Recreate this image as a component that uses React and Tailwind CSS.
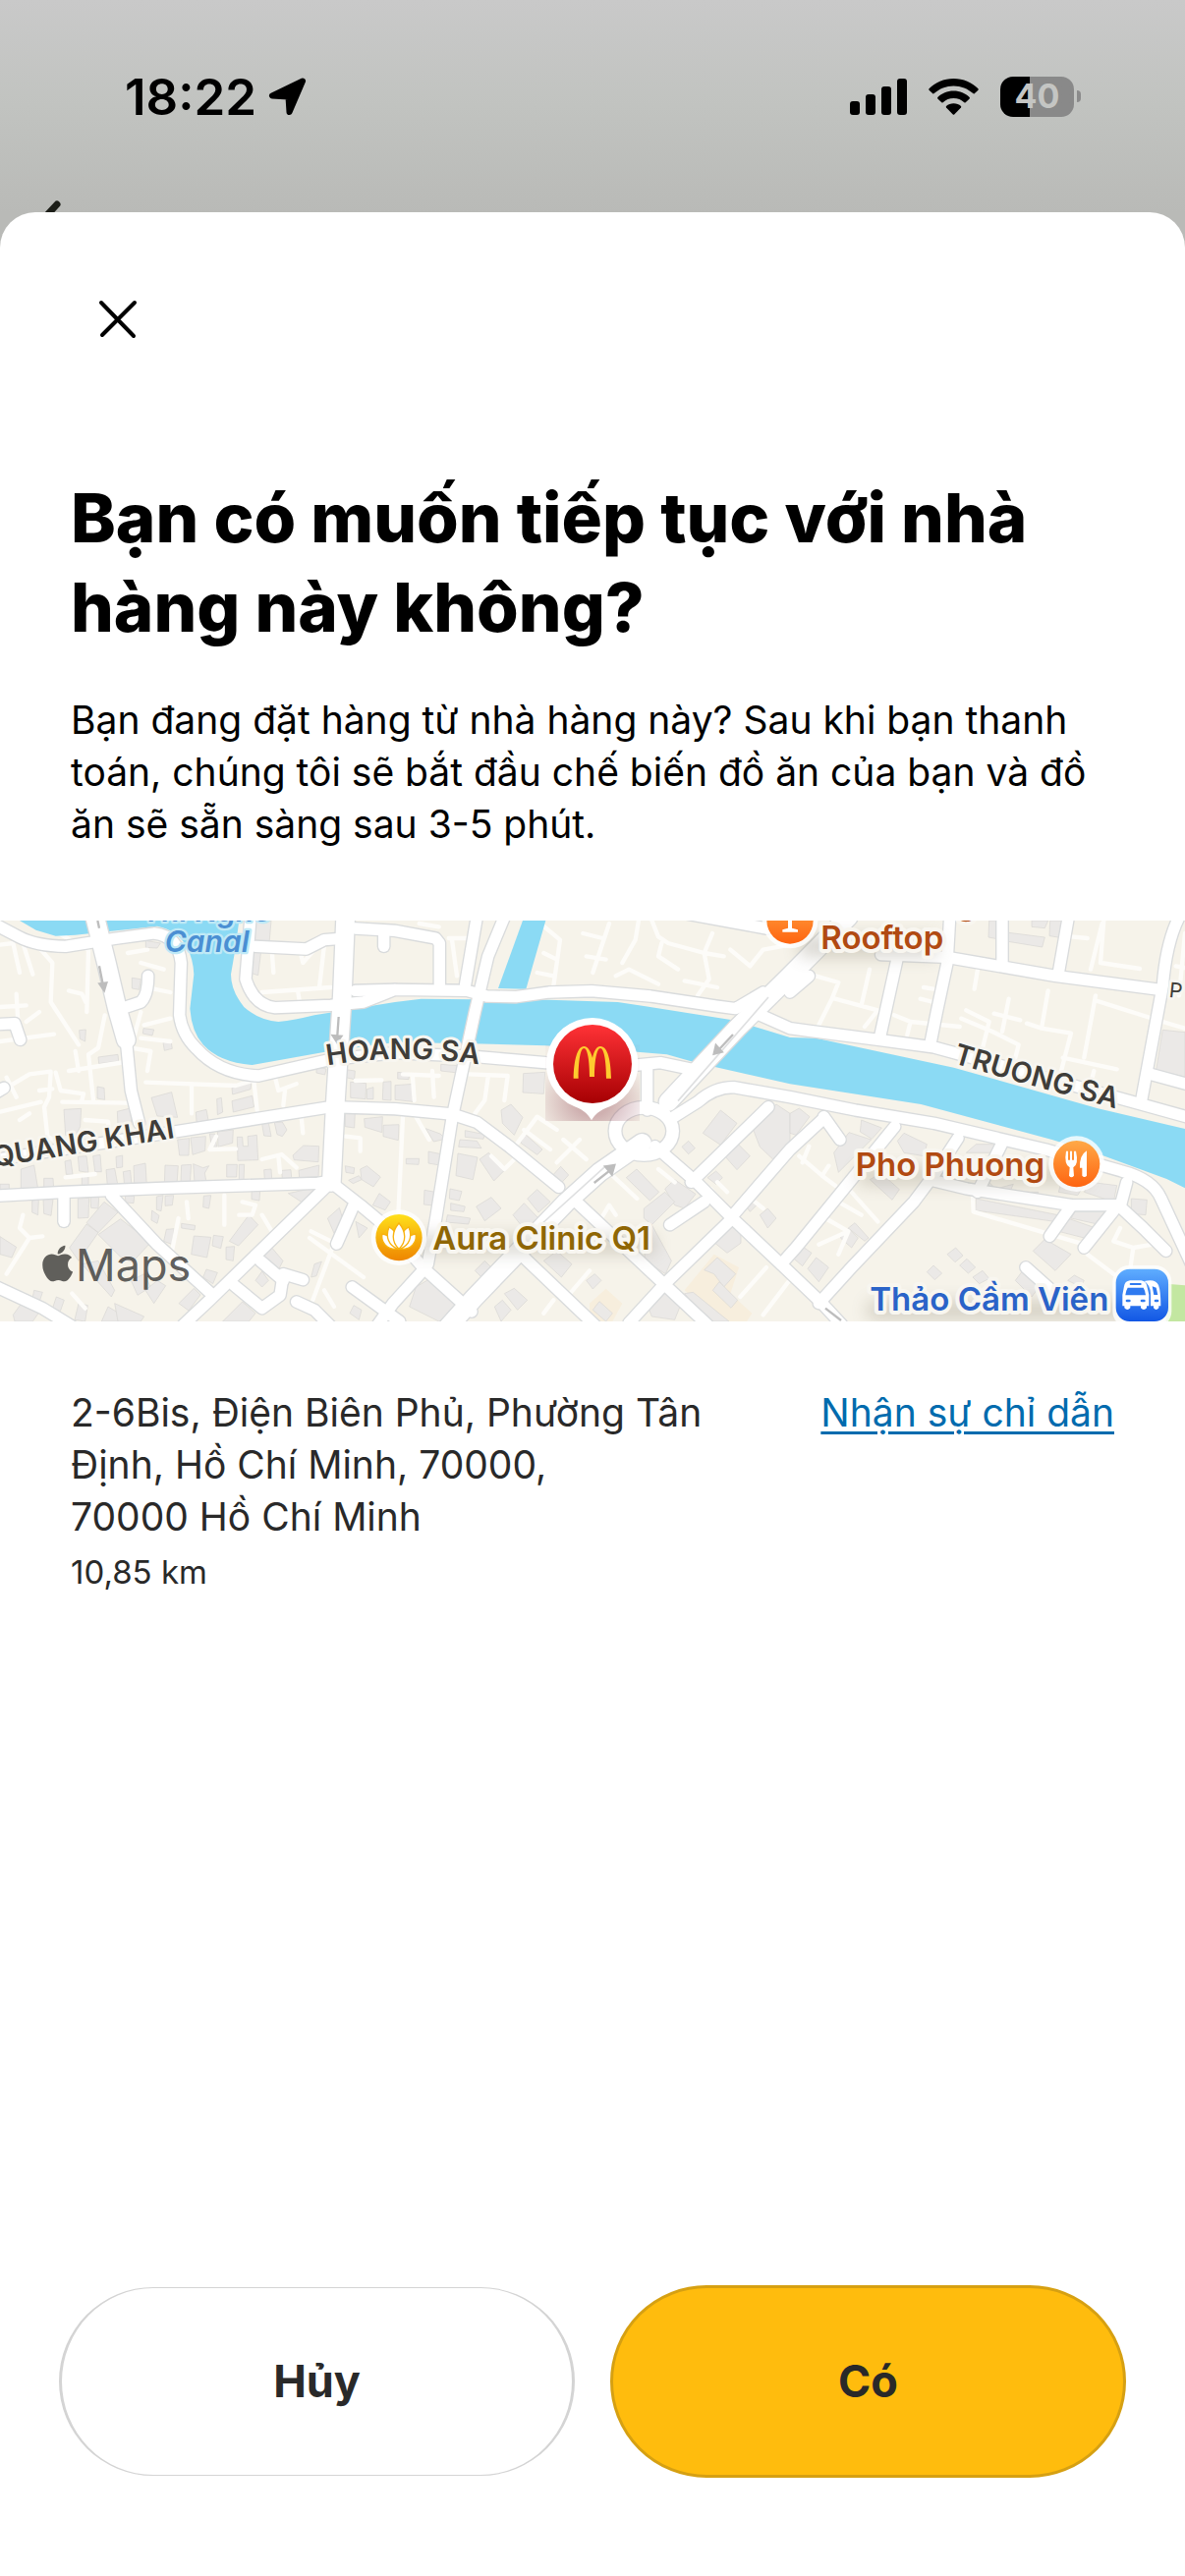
import React from "react";
import { FaApple } from "react-icons/fa";

const WATER = [
  "M60,21 L110,50 L170,68 L230,65 L480,38 Q540,50 570,100 Q590,140 592,185 L580,290 Q585,360 620,400 Q670,455 770,462 L1005,420 L1206,393 L1446,397 L1666,403 L1946,422 L2036,430 L2126,455 L2246,482 L2412,520 L2812,582 L3212,690 L3372,740 L3562,810 L3618,838 V657 L3352,595 L2912,470 L2492,380 L2412,378 L2346,358 L2236,325 L1966,282 L1886,270 L1676,263 L1446,262 L1286,260 L1206,270 L1080,290 L960,310 Q900,325 850,330 Q790,325 745,285 Q705,235 705,185 L718,110 L730,21 Z",
  "M1596,21 H1666 L1606,230 L1521,228 Z",
];

const WIDE_ROADS = [
  "M1055,10 L1045,250 L1025,560 L1012,820",
  "M290,10 L325,150 L358,290 L385,385",
  "M2590,10 L2412,190 L2250,350 L2040,575",
  "M1960,700 L1830,790 L1730,880 L1446,1175 L1370,1260",
];

const ROADS = [
  "M-20,30 L60,72 Q110,98 200,100 L350,76 L470,60 Q545,68 553,150 L548,310 Q556,370 600,412 Q670,490 790,495 L1010,445 L1206,425 L1446,436 L1666,455 L1946,462 L2016,455 L2112,475",
  "M385,385 L400,540 L425,640",
  "M385,285 L430,270 Q452,250 452,190",
  "M-20,752 L540,665 L1010,590 L1206,596 L1380,612 L1456,637 L1556,712 L1706,835",
  "M-20,862 L200,850 L500,838 L970,823 L1020,815",
  "M1010,820 L640,1180 L560,1255",
  "M1010,820 L1100,890 L1190,965 L1296,1085 L1440,1215",
  "M340,860 L480,1010 L650,1165",
  "M1080,890 L1028,1008",
  "M195,865 V940",
  "M-20,1135 L130,1205 L220,1260",
  "M715,1135 L800,1205 L855,1165 L865,1100 L925,1118",
  "M795,1060 L865,1120",
  "M905,1185 L960,1210 L1010,1260",
  "M1075,1140 L1220,1245",
  "M-10,545 L12,532",
  "M-10,338 L45,335 L62,385",
  "M765,10 L750,200 Q775,280 840,287 L1010,280 L1110,270 L1206,232 L1426,235 L1486,252 L1576,254 L1676,240 L1806,236 L1986,252 L2186,282 L2246,290 L2330,240",
  "M1085,235 L1206,232",
  "M780,100 L935,108 L990,80 L1040,76",
  "M1085,45 L1206,52 L1330,75 L1342,90 V215",
  "M1172,55 V100",
  "M1540,10 L1490,130 L1450,300 L1381,620 L1331,930 L1306,1070",
  "M1456,10 L1421,215",
  "M1300,1080 L1200,1190 L1150,1260",
  "M1976,600 V470",
  "M2050,625 L2130,575 Q2180,530 2240,530 L2412,560 L2612,600 L2852,640 L3192,720 L3422,785 Q3520,810 3545,870 L3640,1075",
  "M2000,710 L2126,820 L2236,930 L2400,1085 L2510,1190 L2570,1255",
  "M2110,820 L2346,590",
  "M2230,930 L2412,720 L2515,625",
  "M2515,620 L2565,690",
  "M2236,930 L2030,1130 L1920,1250",
  "M1760,880 L2026,1130 L2160,1255",
  "M1600,1050 L1820,1260",
  "M2150,880 L2045,950",
  "M2385,1070 L2430,1020 L2732,650",
  "M2500,1190 L2600,1080 L2790,880 L2850,800 L2925,685",
  "M2300,300 L2412,350 L2472,358 L2682,385 L2852,408 L3352,545 L3640,625",
  "M2742,125 L2687,375",
  "M2900,10 L2892,150 L2860,300 L2840,400",
  "M2690,125 L2892,133 L3222,190 L3542,232",
  "M3262,10 L3232,180",
  "M3600,10 Q3560,90 3550,220 L3485,570",
  "M3512,490 L3640,525",
  "M3060,10 V150",
  "M2412,240 L2470,190",
  "M2850,815 L2952,840 L3272,890 L3422,890",
  "M3440,820 L3420,895 L3490,960 L3560,1030",
  "M3272,890 L3205,985",
  "M3402,905 L3310,1020",
  "M3132,1080 L3210,1150",
  "M3060,700 L2985,850",
  "M2040,-10 L2340,45",
];

const LANES = [
  "M0,95 L40,90 L60,180 M70,90 L100,185 M90,70 L160,150 L155,270 L240,400 M210,235 L250,245 L262,270 M270,110 L265,300",
  "M160,50 L270,110 M390,120 L450,110 M430,150 L500,170 M470,230 L520,240 M430,300 L400,410 L460,420 L450,480 M440,340 L520,320 M430,380 L520,390",
  "M50,245 L55,330 M0,285 L80,280 M80,330 L120,300 M0,390 L165,368 M320,310 L300,410 L270,430 L285,570 M210,480 L400,450",
  "M20,500 L50,560 M40,520 L90,490 L155,482 L150,560 L135,590 L145,680 L180,700 M120,540 L160,535 M170,485 L185,540 L255,550 L250,570 M190,575 L390,578 M0,605 L125,575 M60,630 L90,610 M230,420 L240,480",
  "M445,515 L720,525 L770,510 M585,520 V610 M775,510 L785,600 M840,500 L850,540 L905,520 M870,540 L865,585",
  "M660,680 L640,720 L720,718 M800,750 L860,735 L905,775 M850,740 L855,790 M200,805 L290,795 M260,630 L330,635 L335,690",
  "M70,920 L60,960 L90,990 L130,985 M90,990 L20,1100 M220,1160 L260,1205 M545,930 L525,1030 M570,880 L575,930 M685,860 V950 M740,880 L780,890 L770,920 L730,920 M800,920 L830,970",
  "M950,970 L1030,1010 M945,990 L1110,1110 M1015,1020 L955,1180 M990,1150 L1020,1200 M1055,680 L1100,685 V725 M920,620 L925,670",
  "M830,110 L835,180 M920,130 L925,150 L960,110 M990,95 L975,225 M800,240 L1010,225 M910,240 L918,290 M1085,510 L1165,508",
  "M1230,490 L1340,495 M1260,500 L1265,570 M1320,480 L1325,560 M1430,490 L1550,495 L1540,570 M1490,500 L1480,570 L1450,610 M1230,620 L1215,940 M1270,620 L1310,690",
  "M1580,700 L1640,620 L1700,660 M1600,660 L1680,720 M1720,690 L1790,750 M1770,690 L1700,760 M1500,740 L1540,780 L1580,740 M1860,790 L1945,870 M1830,940 L1860,890 L1880,920",
  "M1650,30 L1710,80 L1690,220 M1660,120 L1700,140 M1640,180 L1690,190 M1860,30 L1810,180 M1780,60 L1840,75 M1790,130 L1850,140 M1900,150 L1940,80 L1950,20 M1880,190 L1920,170 L2010,215",
  "M1990,20 L2010,70 L2040,90 L2150,120 L2210,130 M2175,60 L2150,120 L2165,200 L2130,250 M2090,205 L2190,225 M2020,90 L2010,130 L2070,170 M2230,110 L2290,160 L2330,110 L2412,95 M1370,75 L1430,75 M1380,80 L1395,190 M1280,30 L1340,40",
  "M2490,190 L2560,210 L2540,260 L2500,340 M2550,260 L2680,295 L2640,345 M2655,170 L2630,280 M2730,310 L2780,330 L2770,370 M2780,330 L2930,345 M2820,225 L2850,230 M2810,260 L2850,270",
  "M2985,170 L2975,230 M2950,295 L3020,330 L3000,410 M2935,320 L3030,360 L3110,400 L3100,440 M3080,260 L3060,360 M3035,305 L3115,325 M3135,335 L3180,350 L3270,365 L3240,480 M3200,235 L3180,350 M3345,250 L3310,440 M3245,440 L3410,475 M3345,265 L3550,330 L3618,350 M3340,480 L3330,520",
  "M3365,30 L3330,170 M3360,150 L3480,168 M3370,20 L3360,150 M3270,70 L3320,75 M3590,160 L3618,165 M3618,60 L3600,250",
  "M2440,740 L2510,800 M2470,710 L2450,760 M2530,770 L2510,800 L2550,830 M2560,880 L2630,920 M2600,850 L2680,940 M2520,930 L2590,970 L2500,1010 M2590,970 L2560,1040",
  "M2970,860 L2972,910 L3310,1010 M3320,1040 L3400,1100 M3420,960 L3400,1000 L3460,1020 L3450,1090 M3460,1020 L3520,1010 M2280,860 L2330,900 M2170,840 L2200,880 M2340,1080 L2260,1170 M2410,1120 L2330,1225 M2190,820 L2220,850",
  "M1800,1090 L1740,1160 M1660,1220 L1690,1180 M2010,780 L2060,820",
];

const BUILDINGS = [
  "445,82 490,90 480,105 445,103", "780,25 828,21 822,90 776,84", "772,110 797,114 788,188 768,182", "403,196 430,200 425,232 403,228",
  "242,356 262,354 260,390 244,382", "300,438 360,430 362,450 302,458", "438,350 470,354 465,372 436,366", "498,394 522,388 526,412 502,418",
  "297,528 318,532 320,568 297,564", "462,562 524,545 542,622 480,618", "195,598 248,595 245,650 230,680 200,676", "358,604 398,594 402,645 360,648",
  "662,566 676,562 680,606 664,614", "708,572 770,556 776,590 712,606", "708,532 768,514 765,536 710,552", "598,606 630,598 636,630 600,636",
  "542,690 578,686 576,738 548,738", "582,684 628,680 626,724 588,736", "640,672 656,672 662,712 646,710", "664,666 712,660 710,700 666,712",
  "724,682 740,682 742,710 758,710 756,680 784,676 788,752 726,754", "800,642 820,638 828,680 806,678", "838,638 862,636 876,660 862,680 846,674",
  "894,738 926,708 974,710 972,758 898,752", "912,784 974,768 972,804 914,806", "806,782 828,780 830,810 808,812", "860,784 888,782 890,806 862,810",
  "64,780 104,768 116,840 64,842", "134,808 162,808 164,838 134,838", "0,826 28,826 28,846 0,846", "198,756 216,752 222,796 202,796",
  "238,742 264,740 270,790 242,786", "284,740 306,736 310,788 290,788", "250,800 270,800 270,836 250,836", "324,782 350,778 360,830 328,832",
  "376,788 398,784 402,830 380,830", "408,770 444,762 448,828 410,830", "504,768 544,770 540,826 502,826", "554,768 584,766 580,822 552,822",
  "590,764 620,776 638,770 625,792 630,818 594,822", "692,766 724,766 722,804 692,804", "730,766 746,766 744,814 730,814", "354,742 374,738 374,774 356,776",
  "98,876 118,874 116,920 98,912", "132,872 162,872 156,922 134,916", "238,870 272,868 270,928 238,930", "276,866 302,866 300,900 278,898",
  "382,862 410,862 408,884 384,882", "478,864 498,860 492,908 478,904", "504,862 530,860 526,890 504,892", "622,862 644,860 638,900 620,896",
  "768,848 794,844 792,876 768,872", "880,854 964,836 920,880", "0,986 50,1018 36,1050 0,1040", "264,944 318,880 360,912 300,974",
  "300,980 368,932 460,1004 404,1064 370,1050", "212,1020 264,948 300,974 240,1060", "250,1070 300,1060 350,1150 340,1170", "464,906 486,922 480,946 462,936",
  "554,946 596,952 594,966 554,960", "508,964 532,962 526,1010 500,1000", "592,984 644,988 632,1050 584,1040", "652,982 682,986 674,1022 648,1014",
  "690,1018 716,1016 712,1060 690,1056", "700,1000 760,920 788,950 728,1014", "630,1086 664,1096 650,1130 620,1110", "400,1120 440,1100 460,1140 420,1165",
  "444,1150 480,1120 506,1136 470,1190", "546,1190 592,1144 612,1164 576,1212", "104,1150 130,1156 120,1186 98,1180", "172,1170 196,1180 184,1214 160,1206",
  "40,1225 80,1170 120,1216 100,1245 45,1245", "240,1190 268,1196 260,1245 228,1240", "310,1245 330,1200 380,1230 400,1245", "350,1190 440,1230 430,1245 360,1245",
  "680,1245 740,1185 780,1220 760,1245", "780,1120 800,1092 820,1120 800,1140", "806,1046 830,1020 864,1060 850,1088", "960,1070 982,1062 966,1106 950,1110",
  "1000,930 1036,898 1046,930 1020,976", "1086,940 1122,960 1096,990", "1138,890 1158,854 1192,880 1176,905", "1054,770 1082,776 1080,794 1056,790",
  "1064,814 1096,800 1104,812 1078,824", "1100,780 1120,770 1162,804 1140,834 1104,812", "1068,1220 1080,1196 1104,1210 1096,1240",
  "966,466 996,474 992,492 966,486", "1056,476 1084,480 1082,506 1056,500", "1070,514 1118,518 1116,566 1070,562", "1120,536 1140,530 1140,566 1120,566",
  "1170,514 1194,512 1194,570 1168,568", "1054,602 1084,606 1082,654 1054,650", "1112,626 1168,620 1166,668 1114,652", "1170,646 1218,644 1216,692 1170,680",
  "1214,484 1250,488 1248,506 1214,504", "1206,524 1262,520 1260,574 1206,568", "1346,460 1400,464 1398,486 1346,480", "1598,488 1664,484 1660,550 1596,546",
  "1420,662 1480,674 1476,688 1420,682", "1404,690 1456,694 1470,716 1400,712", "1398,732 1458,744 1444,812 1392,800", "1300,656 1344,672 1360,688 1324,696",
  "1308,726 1346,734 1342,768 1308,762", "1240,748 1280,748 1278,766 1240,764", "1464,750 1492,730 1538,786 1508,816", "1530,600 1560,582 1596,622 1570,676 1534,640",
  "1600,670 1656,720 1640,736 1590,700", "1374,840 1410,848 1402,876 1372,870", "1376,884 1420,894 1416,910 1376,906", "1366,920 1436,930 1430,948 1362,942",
  "1296,844 1340,852 1336,892 1294,888", "1454,894 1500,866 1530,900 1480,938", "1566,920 1600,884 1644,930 1606,970", "1610,870 1640,842 1680,880 1644,912",
  "1690,796 1712,772 1736,798 1716,820", "1912,806 1944,780 2012,850 1984,876", "2030,840 2060,812 2124,856 2090,900 2060,890", "1966,900 2030,850 2060,880 1990,950 1966,930",
  "1960,960 1990,950 2050,1060 2032,1100 1970,1060", "2082,712 2102,694 2122,716 2102,734", "2146,670 2200,600 2250,640 2200,706", "2300,660 2370,582 2412,610 2412,700 2360,750 2320,712",
  "2160,806 2186,786 2206,806 2186,826", "2204,730 2240,690 2290,740 2250,782", "2176,1000 2220,950 2262,970 2262,1006 2220,1036", "2150,1088 2190,1050 2246,1100 2210,1140 2180,1100",
  "2176,1150 2196,1124 2252,1180 2232,1204", "1970,1180 2030,1150 2076,1200 2060,1240 1990,1230", "1660,1060 1700,1030 1746,1070 1714,1110", "1790,1120 1816,1100 1836,1120 1810,1146",
  "1810,1210 1830,1184 1870,1220 1850,1245", "1540,1160 1570,1144 1610,1180 1580,1210", "1510,1200 1534,1180 1560,1210 1530,1245", "1270,1140 1310,1116 1380,1170 1400,1210 1340,1245 1250,1200",
  "2090,1160 2116,1156 2226,1245 2160,1245", "2260,870 2280,850 2310,890 2290,910", "2320,920 2344,900 2370,930 2344,960", "1450,1090 1480,1060 1500,1080 1470,1110",
  "2412,610 2440,594 2472,620 2430,676 2412,670", "2546,730 2592,668 2660,690 2560,790", "2630,630 2692,654 2662,688 2626,666", "2740,694 2760,670 2830,704 2820,740 2760,730",
  "2656,812 2690,792 2746,842 2724,874", "2950,730 2980,704 3046,704 3040,730", "2990,822 3020,820 3040,840 3094,826 3080,856 3000,850", "3106,850 3170,850 3166,876 3104,870",
  "3190,860 3250,868 3240,890 3186,882", "3240,820 3310,830 3290,860 3232,850", "3310,850 3330,820 3410,830 3400,880", "3270,930 3300,880 3386,900 3360,950",
  "3232,970 3260,930 3346,960 3310,990", "3154,1030 3190,994 3270,1040 3222,1090", "3454,870 3502,874 3498,920 3454,916", "2980,870 3230,920 3220,940 2978,906",
  "2892,1040 2918,1020 2940,1044 2916,1064", "2930,1074 2952,1054 2978,1080 2956,1098", "2830,1094 2850,1074 2876,1098 2854,1118", "3100,1120 3124,1088 3180,1130 3150,1170",
  "2420,1050 2450,1016 2478,1036 2450,1076", "2466,1084 2492,1050 2530,1080 2500,1124", "2566,990 2590,960 2620,990 2600,1020", "2590,960 2610,944 2652,990 2640,1000",
  "3550,355 3618,362 3618,498 3530,478", "3020,21 3060,21 3050,78 3018,72", "3080,58 3190,72 3182,102 3072,84", "3150,21 3200,21 3190,44 3150,40",
  "3206,21 3254,21 3244,74 3204,68", "2970,1110 3000,1090 3020,1114 2990,1130", "3260,1120 3280,1104 3310,1120 3300,1140",
];

const ARROWS = [
  "M303,160 L314,215 M304,214 L318,234 L325,211 Z",
  "M1034,315 L1030,372 M1016,372 L1029,392 L1042,374 Z",
  "M2238,369 L2196,414 M2186,402 L2180,428 L2204,422 Z",
  "M1814,822 L1862,784 M1848,772 L1876,768 L1868,796 Z",
  "M2520,1205 L2568,1242",
  "M298,21 L303,44",
];

function MapView() {
  return (
    <svg viewBox="0 21 3618 1224" className="block h-auto w-full font-[Inter,sans-serif]" role="img" aria-label="Maps">
      <defs>
        <linearGradient id="pin" x1="0" y1="0" x2="0" y2="1"><stop offset="0" stopColor="#ff3236" /><stop offset="1" stopColor="#a60003" /></linearGradient>
        <linearGradient id="orange" x1="0" y1="0" x2="0" y2="1"><stop offset="0" stopColor="#ffa947" /><stop offset="1" stopColor="#fe6410" /></linearGradient>
        <linearGradient id="yellow" x1="0" y1="0" x2="0" y2="1"><stop offset="0" stopColor="#ffe01b" /><stop offset="1" stopColor="#ee8500" /></linearGradient>
        <linearGradient id="blue" x1="0" y1="0" x2="0" y2="1"><stop offset="0" stopColor="#5fadff" /><stop offset="1" stopColor="#1257e4" /></linearGradient>
        <radialGradient id="glow" cx="0.5" cy="0.75" r="0.62"><stop offset="0.3" stopColor="#8a3a4a" stopOpacity="0.36" /><stop offset="1" stopColor="#8a3a4a" stopOpacity="0.03" /></radialGradient>
        <filter id="soft" x="-30%" y="-60%" width="160%" height="220%"><feGaussianBlur stdDeviation="26" /></filter>
        <path id="hoangSa" d="M1000,463 Q1225,424 1480,463" />
        <path id="quangKhai" d="M-75,783 L535,684" />
        <path id="truongSa" d="M2908,455 L3060,500 L3450,607" />
      </defs>
      <rect y="21" width="3618" height="1224" fill="#f6f3ea" />
      <path d="M2090,1150 L2180,1040 L2256,1080 L2230,1160 L2296,1220 L2280,1245 H2190 Z M1800,1190 L1850,1145 L1900,1190 L1870,1245 H1800 Z" fill="#f7eedd" />
      <path d="M3560,1130 L3618,1135 V1245 H3560 Z" fill="#c3e7a1" />
      <g fill="#ebe9e7" stroke="#d8d6d3" strokeWidth="2">
        {BUILDINGS.map((p) => <polygon key={p} points={p} />)}
      </g>
      <g fill="none" stroke="#fdfcf9" strokeWidth="13" strokeLinecap="round" strokeLinejoin="round">
        {LANES.map((d) => <path key={d} d={d} />)}
      </g>
      <g fill="#8bdaf4">{WATER.map((d) => <path key={d} d={d} />)}</g>
      <g fill="none" stroke="#d9dbdc" strokeLinecap="round" strokeLinejoin="round">
        <g strokeWidth="42">{ROADS.map((d) => <path key={d} d={d} />)}</g>
        <g strokeWidth="64">{WIDE_ROADS.map((d) => <path key={d} d={d} />)}</g>
        <ellipse cx="1966" cy="664" rx="88" ry="72" strokeWidth="46" />
      </g>
      <g fill="none" stroke="#ffffff" strokeLinecap="round" strokeLinejoin="round">
        <g strokeWidth="34">{ROADS.map((d) => <path key={d} d={d} />)}</g>
        <g strokeWidth="56">{WIDE_ROADS.map((d) => <path key={d} d={d} />)}</g>
        <ellipse cx="1966" cy="664" rx="88" ry="72" strokeWidth="38" />
      </g>
      <path d="M2346,255 L2070,572 M1850,770 L1640,960" fill="none" stroke="#dfe0e1" strokeWidth="5" />
      <g fill="#bdbdbd" stroke="#bdbdbd" strokeWidth="7">{ARROWS.map((d) => <path key={d} d={d} />)}</g>

      <g fill="#77705a" opacity="0.3" filter="url(#soft)">
        <rect x="1240" y="985" width="760" height="50" /><rect x="2620" y="775" width="700" height="50" />
        <rect x="2650" y="1185" width="800" height="50" /><rect x="2440" y="70" width="420" height="60" />
      </g>

      <g stroke="#f8f6f0" strokeWidth="18" strokeLinejoin="round" paintOrder="stroke" fontWeight="600">
        <g fontSize="87" fill="#3f3d39">
          <text><textPath href="#hoangSa">HOANG SA</textPath></text>
          <text textAnchor="end"><textPath href="#quangKhai" startOffset="100%">QUANG KHAI</textPath></text>
          <text><textPath href="#truongSa">TRUONG SA</textPath></text>
          <text x="3568" y="254" fontSize="63" fontWeight="400" transform="rotate(6 3568 254)">P</text>
        </g>
        <g fontSize="90" fontStyle="italic" fill="#4a8fd3" stroke="#bfe9f6" strokeWidth="14">
          <text x="632" y="24" textAnchor="middle">Thi Nghe</text>
          <text x="632" y="118" textAnchor="middle">Canal</text>
        </g>
        <g fontSize="99" strokeWidth="24">
          <text x="1321" y="1027" fill="#8f6604">Aura Clinic Q1</text>
          <text x="2612" y="802" fill="#b14a12">Pho Phuong</text>
          <text x="2506" y="108" fill="#b14a12">Rooftop</text>
          <text x="2920" y="3" fill="#b14a12">g</text>
          <text x="2656" y="1212" fill="#2a63c8">Thảo Cầm Viên</text>
        </g>
      </g>

      <g fill="#ffffff" fillOpacity="0.8">
        <circle cx="1218" cy="989" r="85" /><circle cx="3287" cy="764" r="85" /><circle cx="2412" cy="21" r="85" />
        <rect x="3397" y="1074" width="180" height="190" rx="50" />
      </g>
      <circle cx="1218" cy="989" r="71" fill="url(#yellow)" />
      <g fill="#ffffff" stroke="#f8b20f" strokeWidth="4">
        <path d="M1167,978 C1162,1004 1182,1026 1212,1024 C1204,998 1186,980 1167,978 Z M1269,978 C1274,1004 1254,1026 1224,1024 C1232,998 1250,980 1269,978 Z" />
        <path d="M1188,957 C1176,985 1186,1014 1216,1024 C1222,996 1208,968 1188,957 Z M1248,957 C1260,985 1250,1014 1220,1024 C1214,996 1228,968 1248,957 Z" />
        <path d="M1218,945 C1241,972 1241,1002 1218,1024 C1195,1002 1195,972 1218,945 Z" />
      </g>
      <circle cx="3287" cy="764" r="71" fill="url(#orange)" />
      <path d="M3255,725 H3261 V752 H3267 V725 H3273 V752 H3279 V725 H3285 Q3294,765 3277,775 L3279,800 Q3271,810 3264,800 L3266,775 Q3248,765 3255,725 Z M3318,724 V800 Q3311,808 3304,800 V776 H3297 Q3295,738 3318,724 Z" fill="#ffffff" />
      <circle cx="2412" cy="21" r="71" fill="url(#orange)" />
      <path d="M2406,10 H2418 V44 L2436,49 V56 H2389 V49 L2406,44 Z" fill="#ffffff" />
      <rect x="3407" y="1085" width="160" height="160" rx="42" fill="url(#blue)" />
      <g fill="#ffffff">
        <path d="M3494,1122 Q3528,1114 3537,1134 Q3544,1152 3544,1198 H3538 V1204 Q3530,1214 3522,1204 V1198 H3513 V1160 Q3512,1134 3494,1122 Z" />
        <path d="M3450,1120 H3484 Q3500,1122 3502,1138 L3508,1164 V1198 H3501 V1204 Q3492,1214 3483,1204 V1198 H3451 V1204 Q3442,1214 3433,1204 V1198 H3427 V1164 L3432,1138 Q3434,1122 3450,1120 Z" />
      </g>
      <g fill="#2f7af0">
        <rect x="3449" y="1128" width="36" height="6" rx="3" />
        <path d="M3443,1142 H3491 Q3497,1152 3498,1165 H3436 Q3437,1152 3443,1142 Z" />
        <rect x="3437" y="1178" width="15" height="8" rx="4" /><rect x="3482" y="1178" width="15" height="8" rx="4" />
        <path d="M3518,1138 L3530,1142 L3535,1164 H3523 Z" /><rect x="3524" y="1178" width="14" height="8" rx="4" />
      </g>

      <rect x="1665" y="400" width="288" height="233" fill="url(#glow)" />
      <path d="M1809,318 A141,141 0 0 1 1862,589 C1828,602 1818,612 1806,631 C1794,612 1786,602 1754,589 A141,141 0 0 1 1809,318 Z" fill="#ffffff" />
      <circle cx="1809" cy="459" r="120" fill="url(#pin)" />
      <path transform="translate(1206 0)" d="M545,503 C546,450 556,405 577,405 C590,405 599,425 603,440 C606,425 614,405 627,405 C650,405 659,450 660,503 H645 C645,450 638,411 627,411 C616,411 609,450 609,498 H594 C594,450 588,411 577,411 C566,411 560,450 560,503 Z" fill="#ffcb2f" />

      <g fill="#454442" fillOpacity="0.85" color="#454442">
        <FaApple x="113" y="1005" size="126" />
        <text x="231" y="1122" fontSize="135">Maps</text>
      </g>
    </svg>
  );
}

function StatusBar() {
  return (
    <header className="relative flex h-[216px] items-start justify-between bg-linear-to-b from-[#c9c9c9] via-[#c1c3c0] to-[#b9bab7] pt-[76px] pr-[106px] pl-[127px]">
      <div className="flex h-11 items-center gap-3">
        <span className="text-[51px] leading-none font-semibold">18:22</span>
        <svg className="h-10 w-10" viewBox="0 0 40 40" aria-hidden="true">
          <path d="M35,4.500 L4,19.500 L20.500,20.500 L21.500,36 Z" fill="#000" stroke="#000" strokeWidth="6" strokeLinejoin="round" />
        </svg>
      </div>
      <div className="flex h-11 items-center gap-[22px]">
        <svg className="h-[37px] w-[58px]" viewBox="0 0 58 37" aria-hidden="true">
          <rect y="23" width="10" height="14" rx="3" /><rect x="16" y="16" width="10" height="21" rx="3" />
          <rect x="32" y="8" width="10" height="29" rx="3" /><rect x="48" width="10" height="37" rx="3" />
        </svg>
        <svg className="h-[37px] w-[51px]" viewBox="0 0 51 37" aria-hidden="true">
          <path d="M25.500,0 C35.500,0 44,3.800 50.500,10.200 Q51,11 50.500,11.700 L46.700,15.200 Q46,15.700 45.300,15.100 C40,10.200 33,7.400 25.500,7.400 C18,7.400 11,10.200 5.700,15.100 Q5,15.700 4.300,15.200 L0.500,11.700 Q0,11 0.500,10.200 C7,3.800 15.500,0 25.500,0 Z" />
          <path d="M25.500,12.500 C32,12.500 37.500,15 41.700,19 Q42.200,19.700 41.700,20.400 L37.700,24.200 Q37,24.800 36.300,24.200 C33.500,21.600 29.700,20 25.500,20 C21.300,20 17.500,21.600 14.700,24.200 Q14,24.800 13.300,24.200 L9.300,20.400 Q8.800,19.700 9.300,19 C13.500,15 19,12.500 25.500,12.500 Z" />
          <path d="M25.500,25.300 C28.500,25.300 31,26.400 33,28 Q33.500,28.700 33,29.400 L26.200,36.400 Q25.500,37 24.800,36.400 L18,29.400 Q17.500,28.700 18,28 C20,26.400 22.500,25.300 25.500,25.300 Z" />
        </svg>
        <div className="flex items-center gap-[3px]">
          <div className="flex h-[41px] w-[75px] items-center justify-center rounded-[13px] bg-linear-to-r from-black from-40% to-[#898989] to-40% text-[34px] leading-none font-bold text-[#c4c5c3]">40</div>
          <div className="h-3 w-1 rounded-r-full bg-[#8b8b8b]" />
        </div>
      </div>
      <svg className="absolute bottom-0 left-[44px] h-3 w-[18px]" viewBox="0 0 18 12" aria-hidden="true">
        <path d="M14,4 L2,17" stroke="#1c1e18" strokeWidth="7" strokeLinecap="round" />
      </svg>
    </header>
  );
}

export default function App() {
  return (
    <div className="flex min-h-screen flex-col bg-[#b9bab7] font-[Inter,sans-serif] text-black">
      <StatusBar />
      <main className="flex grow flex-col rounded-t-[36px] bg-white pt-[73px] pb-[100px]">
        <div className="px-[84px]">
          <button type="button" aria-label="Đóng" className="flex size-[72px] items-center justify-center">
            <svg className="size-10" viewBox="0 0 40 40" aria-hidden="true">
              <path d="M3,3 L36,37 M37,3 L4,36" stroke="#000" strokeWidth="4" strokeLinecap="round" />
            </svg>
          </button>
        </div>
        <div className="px-[72px]">
          <h1 className="mt-[121px] text-[69px] leading-[91px] font-extrabold">Bạn có muốn tiếp tục với nhà hàng này không?</h1>
          <p className="mt-[42px] text-[39px] leading-[53px]">
            Bạn đang đặt hàng từ nhà hàng này? Sau khi bạn thanh toán, chúng tôi sẽ bắt đầu chế biến đồ ăn của bạn và đồ ăn sẽ sẵn sàng sau 3-5 phút.
          </p>
        </div>
        <div className="mt-[72px]"><MapView /></div>
        <div className="mt-[66px] flex items-start justify-between px-[72px] text-[39px] leading-[53px] text-[#292929]">
          <div>
            <address className="not-italic">
              2-6Bis, Điện Biên Phủ, Phường Tân<br />Định, Hồ Chí Minh, 70000,<br />70000 Hồ Chí Minh
            </address>
            <p className="mt-1.5 text-[33px] leading-[48px]">10,85 km</p>
          </div>
          <a href="#directions" className="text-[#006bae] underline decoration-[3px] underline-offset-[5px]">Nhận sự chỉ dẫn</a>
        </div>
        <div className="mt-auto grid grid-cols-2 items-center gap-9 px-[60px]">
          <button type="button" className="h-48 rounded-full border-x-[3px] border-y border-[#d4d4d4] bg-white text-[45px] font-bold text-[#292929]">Hủy</button>
          <button type="button" className="h-[196px] rounded-full border-[3px] border-[#d6a012] bg-[#ffbc0d] text-[45px] font-bold text-[#292929]">Có</button>
        </div>
      </main>
    </div>
  );
}
